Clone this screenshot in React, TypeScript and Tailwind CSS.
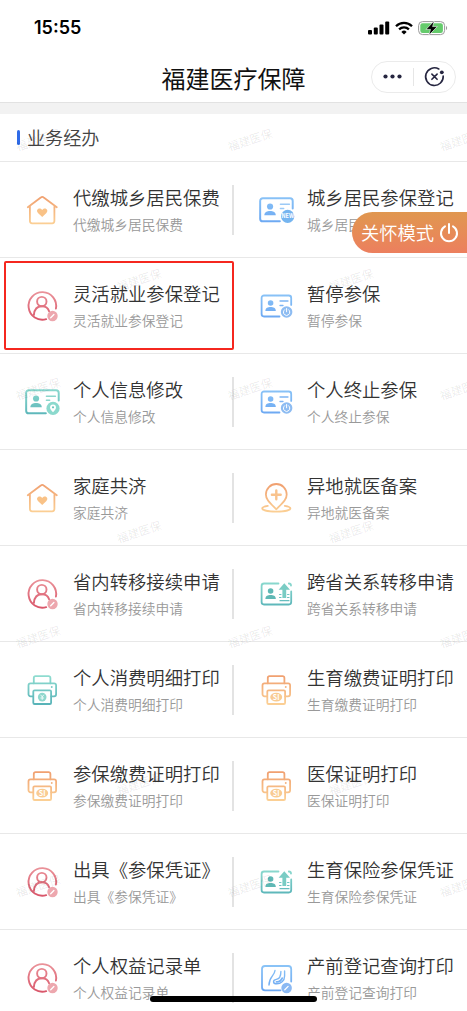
import type { ReactNode } from 'react';

type IconName =
  | 'house'
  | 'person'
  | 'cardNew'
  | 'cardPower'
  | 'cardPin'
  | 'cardUpload'
  | 'location'
  | 'printerTeal'
  | 'printerOrange'
  | 'pregnancy';

interface Service {
  icon: IconName;
  name: string;
  desc?: string;
}

const rows: Service[][] = [
  [
    { icon: 'house', name: '代缴城乡居民保费' },
    { icon: 'cardNew', name: '城乡居民参保登记' },
  ],
  [
    { icon: 'person', name: '灵活就业参保登记' },
    { icon: 'cardPower', name: '暂停参保' },
  ],
  [
    { icon: 'cardPin', name: '个人信息修改' },
    { icon: 'cardPower', name: '个人终止参保' },
  ],
  [
    { icon: 'house', name: '家庭共济' },
    { icon: 'location', name: '异地就医备案' },
  ],
  [
    { icon: 'person', name: '省内转移接续申请' },
    { icon: 'cardUpload', name: '跨省关系转移申请' },
  ],
  [
    { icon: 'printerTeal', name: '个人消费明细打印' },
    { icon: 'printerOrange', name: '生育缴费证明打印' },
  ],
  [
    { icon: 'printerOrange', name: '参保缴费证明打印' },
    { icon: 'printerOrange', name: '医保证明打印' },
  ],
  [
    { icon: 'person', name: '出具《参保凭证》' },
    { icon: 'cardUpload', name: '生育保险参保凭证' },
  ],
  [
    { icon: 'person', name: '个人权益记录单' },
    { icon: 'pregnancy', name: '产前登记查询打印' },
  ],
];

// centre points of the tiled watermark
const watermarks = [
  [38, 140], [250, 140], [462, 140],
  [139, 280], [351, 280],
  [38, 389], [250, 389], [462, 389],
  [139, 532], [351, 532],
  [38, 637], [250, 637], [462, 637],
  [139, 784], [351, 784],
  [38, 886], [250, 886], [462, 886],
];

const gradients = [
  { id: 'orange', from: '#f0a070', to: '#fbcf94' },
  { id: 'red', from: '#ea9299', to: '#d9566a' },
  { id: 'blue', from: '#8cc5f7', to: '#6aa6f2' },
  { id: 'teal', from: '#8fdcd0', to: '#58b3b8' },
];

const GradientDefs = () => (
  <svg className="absolute h-0 w-0">
    <defs>
      {gradients.map((g) => (
        <linearGradient key={g.id} id={g.id} gradientUnits="userSpaceOnUse" x1="0" y1="6" x2="0" y2="34">
          <stop offset="0" stopColor={g.from} />
          <stop offset="1" stopColor={g.to} />
        </linearGradient>
      ))}
    </defs>
  </svg>
);

const CardBody = ({ color, children }: { color: string; children: ReactNode }) => (
  <>
    <path
      d="M23.500 30.500H8a2.400 2.400 0 0 1-2.400-2.400V11.900A2.400 2.400 0 0 1 8 9.500h24.800a2.400 2.400 0 0 1 2.400 2.400v7"
      stroke={`url(#${color})`}
    />
    <circle cx="14.600" cy="17" r="2.800" fill={`url(#${color})`} stroke="none" />
    <path d="M9.400 25c0-3.200 2.500-4 5.200-4s5.200.8 5.200 4z" fill={`url(#${color})`} stroke="none" />
    {children}
  </>
);

const Printer = ({ color, children }: { color: string; children: ReactNode }) => (
  <g stroke={`url(#${color})`}>
    <path d="M11.800 13.300V8a1.800 1.800 0 0 1 1.800-1.800h13A1.800 1.800 0 0 1 28.400 8v5.300" />
    <path d="M11.200 26.300H8.500a2 2 0 0 1-2-2v-9a2 2 0 0 1 2-2h23.600a2 2 0 0 1 2 2v9a2 2 0 0 1-2 2h-2.800" />
    <rect x="11.300" y="20.300" width="17.800" height="13.700" rx="1.300" />
    <path d="M29.700 17h.1" />
    {children}
  </g>
);

const icons: Record<IconName, ReactNode> = {
  house: (
    <g stroke="url(#orange)">
      <path d="M5.800 17.300 18.800 7.500a2.300 2.300 0 0 1 2.900 0L34.800 17.300M7.900 16.500v14.600a2.200 2.200 0 0 0 2.200 2.200h20.100a2.200 2.200 0 0 0 2.200-2.200V16.500" />
      <path
        d="M20.200 26.900l-4-3.700c-3.200-3 .9-6.600 4-3.300 3.100-3.300 7.200.3 4 3.300z"
        fill="#f9c287"
        stroke="none"
      />
    </g>
  ),
  person: (
    <>
      <g stroke="url(#red)" strokeWidth="1.900">
        <path d="M24.200 33.200A13.800 13.800 0 1 1 33.900 22.600" />
        <circle cx="19.800" cy="15.600" r="4.700" />
        <path d="M11.900 28.800c.5-5 3.200-8.500 7.900-8.500 3.900 0 6.500 2.200 7.300 5" />
      </g>
      <circle cx="30.500" cy="30" r="5.200" fill="#eda7ae" />
      <path d="M28.700 31.800l3.200-3.300" stroke="#fff" strokeWidth="1.300" />
    </>
  ),
  cardNew: (
    <g transform="translate(-2 -2.200) scale(1.100)">
      <CardBody color="blue">
        <path d="M24 15h8.200M24 18.800h3" stroke="#9ccaf6" strokeWidth="1.300" />
        <circle cx="30.600" cy="26" r="6" fill="#75b5f0" />
        <text x="30.600" y="27.900" fill="#fff" fontSize="5" fontWeight="700" textAnchor="middle">NEW</text>
      </CardBody>
    </g>
  ),
  cardPower: (
    <CardBody color="blue">
      <path d="M24 15h8M24 19.500h3" stroke="#7eb5f4" strokeWidth="1.300" />
      <circle cx="30.600" cy="26" r="5.800" fill="#8dbcf2" />
      <path d="M30.600 22.500v3.300M28.600 23.700a3.200 3.200 0 1 0 4 0" stroke="#fff" strokeWidth="1" />
    </CardBody>
  ),
  cardPin: (
    <g transform="translate(-2 -2.200) scale(1.100)">
      <CardBody color="teal">
        <path d="M24 15h8.200M24 18.600h3" stroke="#8ad6cc" strokeWidth="1.300" />
        <circle cx="30" cy="26" r="6" fill="#8bd9cd" />
        <path d="M30 29.600c-2-2.200-2.700-3.100-2.700-4.400a2.700 2.700 0 0 1 5.400 0c0 1.300-.7 2.200-2.700 4.400z" fill="#fff" />
        <circle cx="30" cy="25" r="1" fill="#69c4bb" />
      </CardBody>
    </g>
  ),
  cardUpload: (
    <g>
      <g stroke="url(#teal)">
        <path d="M22.500 9.500H8a2.400 2.400 0 0 0-2.400 2.400v16.200A2.400 2.400 0 0 0 8 30.500h24.800a2.400 2.400 0 0 0 2.400-2.400V17.500M32.800 9.500c1.600 0 2.200.7 2.200 2" />
        <path d="M23.500 20.500h1.500M31.500 20.500h1.500M23.500 23.500h1.500M31.500 23.500h1.500M24 26.700h9" strokeWidth="1.200" />
      </g>
      <circle cx="14.600" cy="17" r="2.800" fill="#5fb8b5" />
      <path d="M9.400 25c0-3.200 2.500-4 5.200-4s5.200.8 5.200 4z" fill="#5fb8b5" />
      <path d="M28.300 9.200l5.700 6.600h-3.800v8.200h-3.800v-8.200h-3.800z" fill="#7accc4" />
    </g>
  ),
  location: (
    <g stroke="url(#orange)">
      <path d="M20.300 31.300c-6.700-6.700-10.400-9.700-10.400-14.900a10.400 10.400 0 0 1 20.800 0c0 5.200-3.700 8.200-10.400 14.900z" />
      <path d="M20.300 12.400v8.800M15.900 16.800h8.800" stroke="#f9c38d" strokeWidth="2.400" />
      <path d="M11.800 27.800c-3.600.6-5.600 1.500-5.600 2.500 0 2 6 3.400 14.100 3.400s14.100-1.400 14.100-3.400c0-1-2-1.900-5.600-2.500" />
    </g>
  ),
  printerTeal: (
    <Printer color="teal">
      <circle cx="20.200" cy="27.100" r="4.300" fill="#8fd7cd" stroke="none" />
      <path d="M18.800 25.100l1.400 1.700 1.400-1.700M20.200 26.800v2.700M18.800 28h2.800" stroke="#fff" strokeWidth=".8" />
    </Printer>
  ),
  printerOrange: (
    <Printer color="orange">
      <ellipse cx="20.200" cy="27.100" rx="6" ry="4.300" fill="#f9cb91" stroke="none" />
      <text x="20.200" y="29.600" fill="#fff" stroke="none" fontSize="7" fontWeight="700" textAnchor="middle">SI</text>
    </Printer>
  ),
  pregnancy: (
    <>
      <g stroke="url(#blue)">
        <path d="M24.500 32.300H9a3 3 0 0 1-3-3V11a3 3 0 0 1 3-3h23.200a3 3 0 0 1 3 3v12.500" />
        <path d="M19 12.500c-.5 5.500-6 6-6 14.500M28.600 13v5c0 5-4 7.800-7.800 7.800-4.300 0-4.200-3.700-.5-4.400 3.300-.6 4.600-3.400 4.600-8" strokeWidth="1.400" />
        <path d="M20.500 23.800c2.500.2 4.600-1 5.700-3.600" strokeWidth="1.800" />
      </g>
      <circle cx="30.600" cy="30" r="5.300" fill="#8bb9f3" />
      <path d="M28.800 31.800l3.300-3.400" stroke="#fff" strokeWidth="1.300" />
    </>
  ),
};

const ServiceIcon = ({ name }: { name: IconName }) => (
  <svg className="h-10 w-10 shrink-0" viewBox="0 0 40 40" fill="none" strokeWidth="1.800" strokeLinecap="round" strokeLinejoin="round">
    {icons[name]}
  </svg>
);

const ServiceCell = ({ item }: { item: Service }) => (
  <div className="flex flex-1 items-center pl-[22px]">
    <ServiceIcon name={item.icon} />
    <div className="-mt-0.5 ml-[11px] whitespace-nowrap">
      <div className="text-[18.35px] leading-7 font-[350] text-[#333]">{item.name}</div>
      <div className="mt-[3px] text-[13.75px] leading-5 font-[350] text-[#999]">{item.desc ?? item.name}</div>
    </div>
  </div>
);

const StatusBar = () => (
  <div className="flex h-[56px] items-center justify-between pl-[34px] pr-[19px]">
    <span className="font-['Inter'] text-[18px] leading-none font-semibold text-black">15:55</span>
    <div className="flex items-center gap-[5px]">
      <svg className="h-[14px] w-[22px]" viewBox="0 0 22 14">
        <rect x="0" y="9" width="4" height="4.500" rx="1" />
        <rect x="5.800" y="6.500" width="4" height="7" rx="1" />
        <rect x="11.500" y="3.500" width="4" height="10" rx="1" />
        <rect x="17.200" y="0.500" width="4" height="13" rx="1" />
      </svg>
      <svg className="h-[14px] w-[18px]" viewBox="0 0 18 14" fill="none" stroke="#000" strokeWidth="2.300">
        <path d="M1 5.200a11.400 11.400 0 0 1 16 0M4.100 8.400a7 7 0 0 1 9.800 0" />
        <path d="M9 13.500l-2.600-2.600a3.700 3.700 0 0 1 5.200 0z" fill="#000" stroke="none" />
      </svg>
      <svg className="h-[16px] w-[30px]" viewBox="0 0 30 16">
        <rect x="0.600" y="1.600" width="26" height="13" rx="4" fill="#fff" stroke="#999" strokeWidth="1" />
        <rect x="2.300" y="3.300" width="22.600" height="9.600" rx="2.200" fill="#65cb6c" />
        <path d="M28 6c1.500.5 1.500 3.600 0 4.100z" fill="#999" />
        <path d="M16.300 0.800L8 9.400h4.500L10.800 15.300l8.500-8.700h-4.700z" fill="#000" stroke="#fff" strokeWidth=".6" />
      </svg>
    </div>
  </div>
);

const NavBar = () => (
  <div className="grid h-[47px] grid-cols-[1fr_auto_1fr] border-b border-[#e2e2e2]">
    <div />
    <h1 className="pt-[5px] text-[24px] leading-[34px] text-[#111]">福建医疗保障</h1>
    <div className="mr-[11px] mt-[5px] flex h-[32px] w-[85px] items-center justify-self-end rounded-full border border-[#ebebeb]">
      <svg className="h-5 flex-1" viewBox="0 0 40 20" fill="#262640">
        <circle cx="13" cy="9.500" r="2.100" />
        <circle cx="20" cy="9.500" r="2.100" />
        <circle cx="27" cy="9.500" r="2.100" />
      </svg>
      <div className="h-[18px] w-px bg-[#e6e6e6]" />
      <svg className="h-6 flex-1" viewBox="0 0 40 24" fill="none" stroke="#262640" strokeLinecap="round">
        <path d="M24.300 4A8.800 8.800 0 1 0 28.700 11" strokeWidth="1.600" />
        <path d="M17.400 9.100l5.200 5.200M22.600 9.100l-5.200 5.200" strokeWidth="1.600" />
        <circle cx="27.300" cy="7.300" r="1.900" fill="#262640" stroke="none" />
      </svg>
    </div>
  </div>
);

export default function App() {
  return (
    <div className="relative h-[1011px] w-[467px] overflow-hidden bg-white font-['Noto_Sans_CJK_SC',sans-serif]">
      <GradientDefs />
      <StatusBar />
      <NavBar />
      <div className="h-[11px] bg-[#f2f2f2]" />

      <div className="flex h-[48px] items-center gap-[7px] border-b border-[#e8e8e8] pl-[17px]">
        <div className="h-[15px] w-[3px] rounded-full bg-[#2f6be8]" />
        <h2 className="-mt-px text-[18.1px] leading-7 font-[350] text-[#444]">业务经办</h2>
      </div>

      {rows.map((row) => (
        <div key={row[0].name} className="flex h-24 items-center border-b border-[#e8e8e8]">
          <ServiceCell item={row[0]} />
          <div className="-ml-px h-[50px] w-[2px] bg-[#e3e3e3]" />
          <ServiceCell item={row[1]} />
        </div>
      ))}

      {/* tiled watermark */}
      <div className="pointer-events-none absolute inset-0">
        {watermarks.map(([x, y]) => (
          <span
            key={`${x}-${y}`}
            className="absolute -translate-x-1/2 -translate-y-1/2 -rotate-[18deg] text-[11.5px] leading-none whitespace-nowrap text-black/9"
            style={{ left: x, top: y }}
          >
            福建医保
          </span>
        ))}
      </div>

      <div className="absolute left-[4px] top-[261px] h-[89px] w-[230px] rounded-[2px] border-2 border-[#f5271f]" />

      {/* floating care mode switch */}
      <button className="absolute right-0 top-[212px] flex h-[41px] w-[115px] items-center gap-[5px] rounded-l-full bg-linear-to-b from-[#e0974f] to-[#ec7f5e] pl-[9px] text-[18.3px] font-[350] whitespace-nowrap text-white">
        关怀模式
        <svg className="h-5 w-5 shrink-0" viewBox="0 0 20 20" fill="none" stroke="#fff" strokeWidth="2" strokeLinecap="round">
          <path d="M10 1v9M6 3.300a8 8 0 1 0 8 0" />
        </svg>
      </button>

      <div className="absolute left-[150px] top-[996px] h-[6px] w-[167px] rounded-full bg-black" />
    </div>
  );
}
